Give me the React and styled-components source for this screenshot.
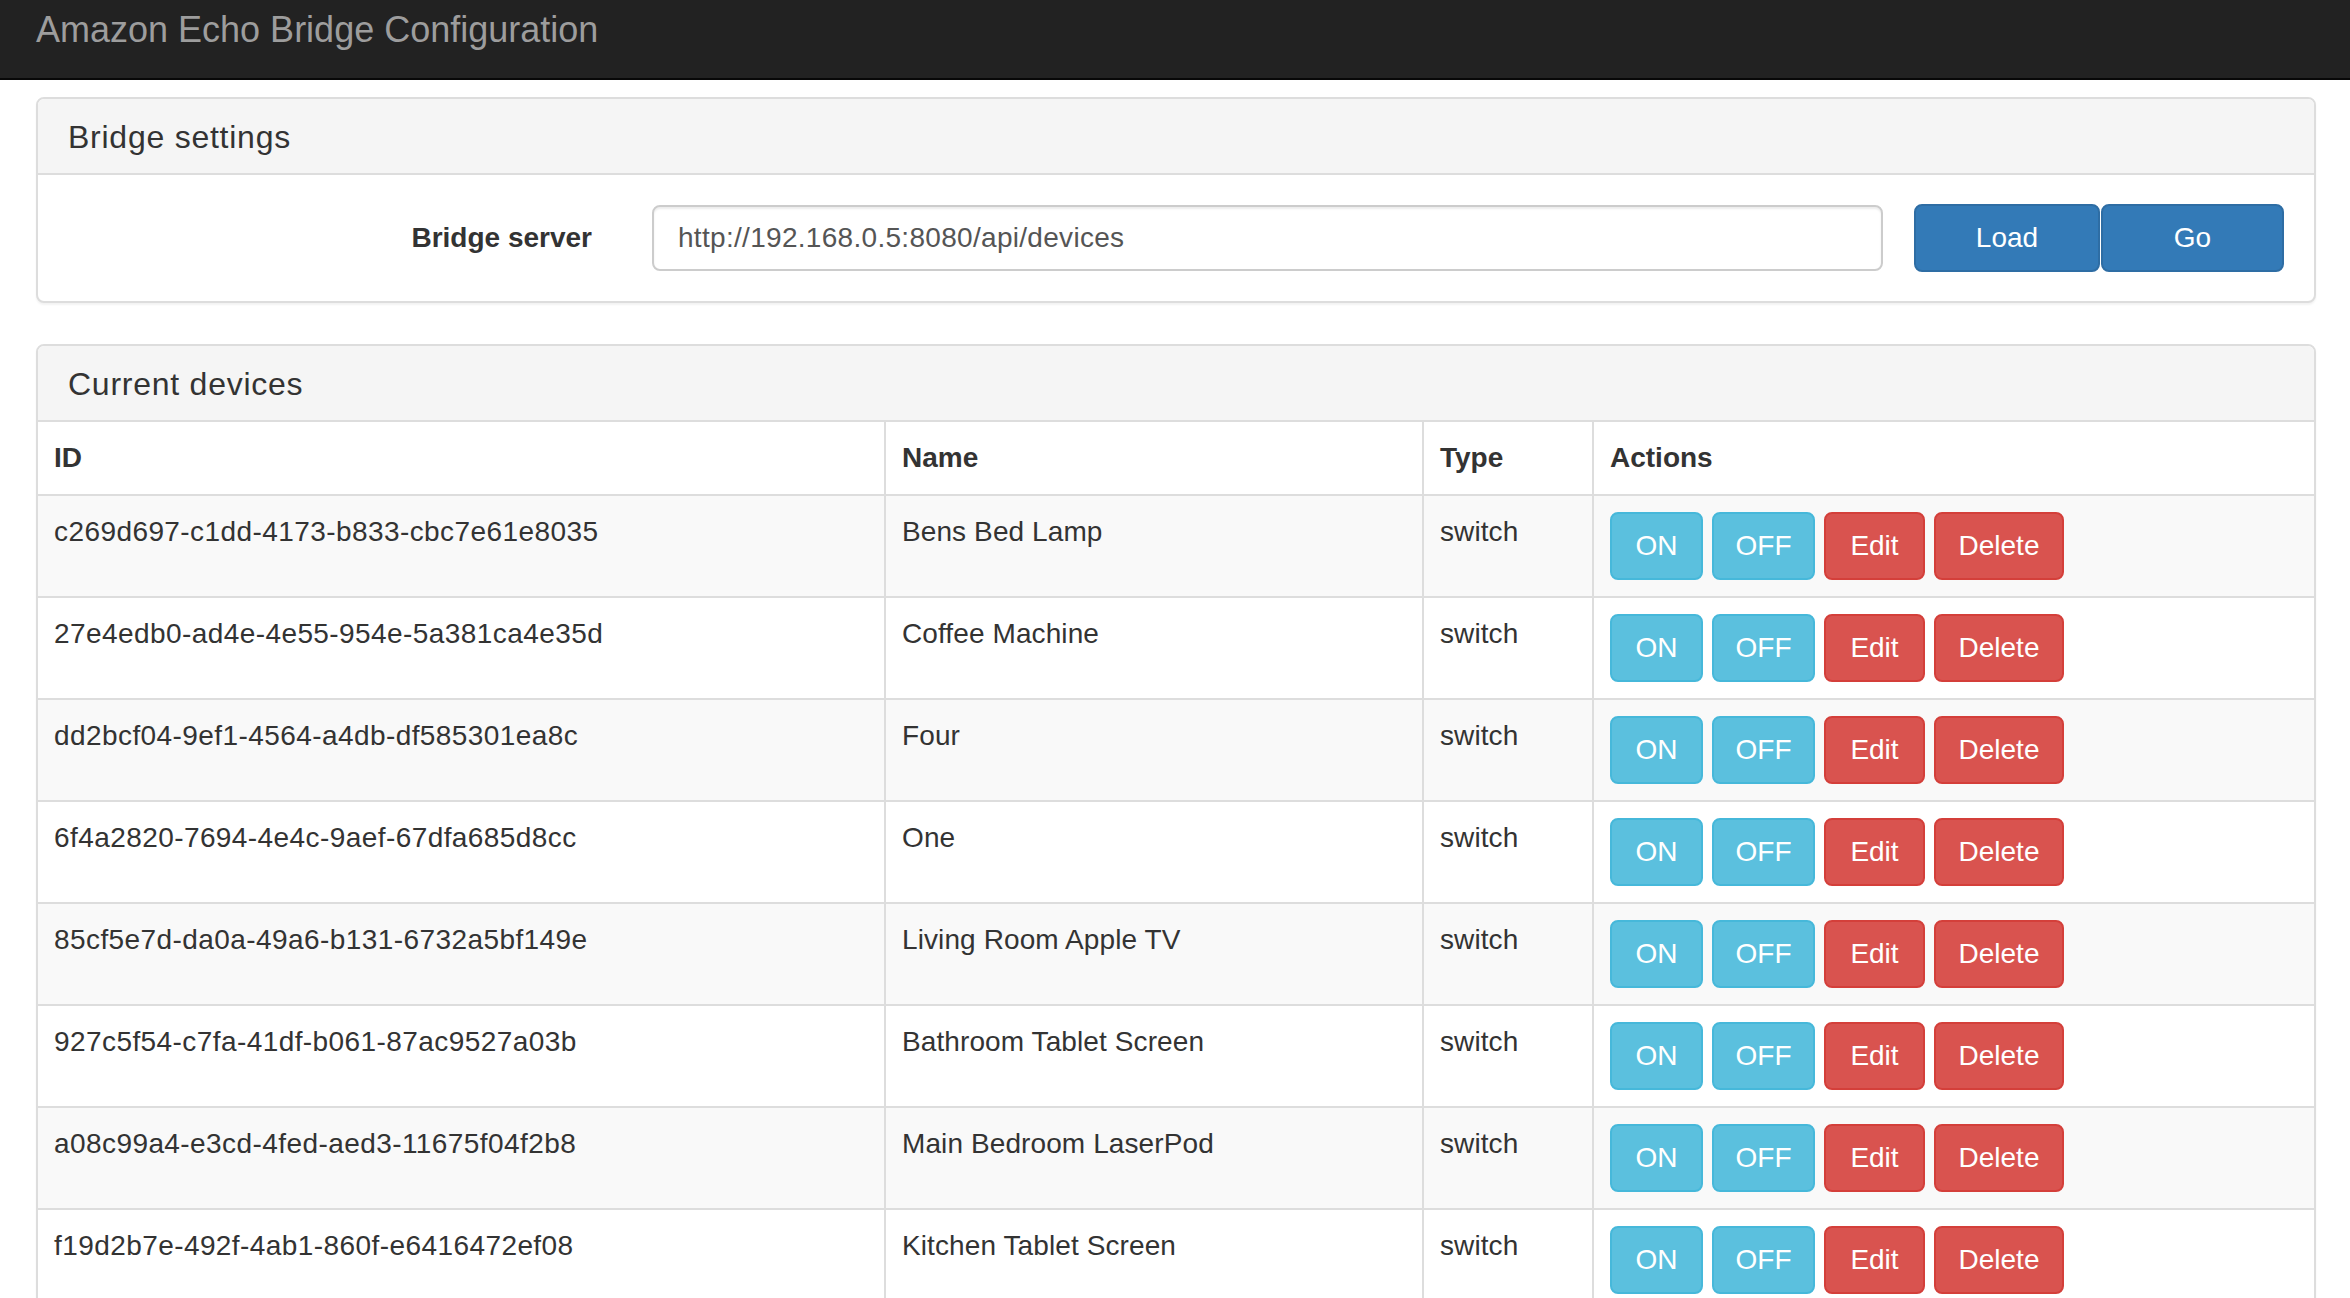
import React from 'react';
import styled, { createGlobalStyle } from 'styled-components';

const GlobalStyle = createGlobalStyle`
  html, body {
    margin: 0;
    padding: 0;
    background: #fff;
  }
  body {
    font-family: "Liberation Sans", Arial, Helvetica, sans-serif;
    font-size: 28px;
    line-height: 40px;
    color: #333;
  }
  * {
    box-sizing: border-box;
  }
`;

const Navbar = styled.div`
  height: 80px;
  background: #222;
  border-bottom: 2px solid #080808;
  padding: 10px 0 0 36px;
`;

const Brand = styled.div`
  font-size: 36px;
  line-height: 40px;
  color: #9d9d9d;
`;

const Main = styled.div`
  padding: 17px 34px 0 36px;
`;

const Panel = styled.div`
  background: #fff;
  border: 2px solid #ddd;
  border-radius: 8px;
  margin-bottom: 41px;
  box-shadow: 0 2px 2px rgba(0, 0, 0, 0.05);
  overflow: hidden;
`;

const PanelHeading = styled.div`
  background: #f5f5f5;
  border-bottom: 2px solid #ddd;
  padding: 21px 30px 19px;
`;

const PanelTitle = styled.h3`
  margin: 0;
  font-size: 32px;
  font-weight: normal;
  line-height: 34px;
  letter-spacing: 0.75px;
  color: #333;
`;

const PanelBody = styled.div`
  padding: 29px 30px;
`;

const FormRow = styled.div`
  display: flex;
  align-items: center;
`;

const Label = styled.label`
  width: 524px;
  margin-right: 60px;
  text-align: right;
  font-weight: bold;
`;

const Input = styled.input`
  flex: 1;
  height: 66px;
  padding: 12px 24px;
  font-family: inherit;
  font-size: 28px;
  letter-spacing: 0.3px;
  color: #555;
  border: 2px solid #ccc;
  border-radius: 8px;
  box-shadow: inset 0 2px 2px rgba(0, 0, 0, 0.075);
  outline: none;
`;

const ButtonGroup = styled.div`
  display: flex;
  gap: 1px;
  margin-left: 31px;
`;

const PrimaryButton = styled.button`
  width: ${p => p.$w}px;
  height: 68px;
  background: #337ab7;
  border: 2px solid #2e6da4;
  border-radius: 8px;
  color: #fff;
  font-family: inherit;
  font-size: 28px;
  cursor: pointer;
`;

const Table = styled.table`
  width: 100%;
  border-collapse: separate;
  border-spacing: 0;
  table-layout: fixed;
`;

const Th = styled.th`
  text-align: left;
  font-weight: bold;
  padding: 16px;
  line-height: 40px;
  border-bottom: 2px solid #ddd;
  border-left: ${p => (p.$first ? 'none' : '2px solid #ddd')};
`;

const Row = styled.tr`
  background: ${p => (p.$striped ? '#f9f9f9' : '#fff')};
`;

const Td = styled.td`
  padding: 16px;
  line-height: 40px;
  vertical-align: top;
  border-bottom: 2px solid #ddd;
  border-left: ${p => (p.$first ? 'none' : '2px solid #ddd')};
  letter-spacing: ${p => (p.$first ? '0.42px' : '0.1px')};
  white-space: nowrap;
`;

const Actions = styled.div`
  display: flex;
  gap: 9px;
`;

const ActionButton = styled.button`
  width: ${p => p.$w}px;
  height: 68px;
  padding: 0;
  border-radius: 8px;
  border: 2px solid ${p => (p.$danger ? '#d43f3a' : '#46b8da')};
  background: ${p => (p.$danger ? '#d9534f' : '#5bc0de')};
  color: #fff;
  font-family: inherit;
  font-size: 28px;
  letter-spacing: 0;
  cursor: pointer;
`;

const devices = [
  { id: 'c269d697-c1dd-4173-b833-cbc7e61e8035', name: 'Bens Bed Lamp' },
  { id: '27e4edb0-ad4e-4e55-954e-5a381ca4e35d', name: 'Coffee Machine' },
  { id: 'dd2bcf04-9ef1-4564-a4db-df585301ea8c', name: 'Four' },
  { id: '6f4a2820-7694-4e4c-9aef-67dfa685d8cc', name: 'One' },
  { id: '85cf5e7d-da0a-49a6-b131-6732a5bf149e', name: 'Living Room Apple TV' },
  { id: '927c5f54-c7fa-41df-b061-87ac9527a03b', name: 'Bathroom Tablet Screen' },
  { id: 'a08c99a4-e3cd-4fed-aed3-11675f04f2b8', name: 'Main Bedroom LaserPod' },
  { id: 'f19d2b7e-492f-4ab1-860f-e6416472ef08', name: 'Kitchen Tablet Screen' },
];

export default function App() {
  return (
    <>
      <GlobalStyle />
      <Navbar>
        <Brand>Amazon Echo Bridge Configuration</Brand>
      </Navbar>
      <Main>
        <Panel>
          <PanelHeading>
            <PanelTitle>Bridge settings</PanelTitle>
          </PanelHeading>
          <PanelBody>
            <FormRow>
              <Label>Bridge server</Label>
              <Input defaultValue="http://192.168.0.5:8080/api/devices" />
              <ButtonGroup>
                <PrimaryButton $w={186}>Load</PrimaryButton>
                <PrimaryButton $w={183}>Go</PrimaryButton>
              </ButtonGroup>
            </FormRow>
          </PanelBody>
        </Panel>

        <Panel>
          <PanelHeading>
            <PanelTitle>Current devices</PanelTitle>
          </PanelHeading>
          <Table>
            <colgroup>
              <col style={{ width: 846 }} />
              <col style={{ width: 538 }} />
              <col style={{ width: 170 }} />
              <col />
            </colgroup>
            <thead>
              <tr>
                <Th $first>ID</Th>
                <Th>Name</Th>
                <Th>Type</Th>
                <Th>Actions</Th>
              </tr>
            </thead>
            <tbody>
              {devices.map((d, i) => (
                <Row key={d.id} $striped={i % 2 === 0}>
                  <Td $first>{d.id}</Td>
                  <Td>{d.name}</Td>
                  <Td>switch</Td>
                  <Td>
                    <Actions>
                      <ActionButton $w={93}>ON</ActionButton>
                      <ActionButton $w={103}>OFF</ActionButton>
                      <ActionButton $w={101} $danger>Edit</ActionButton>
                      <ActionButton $w={130} $danger>Delete</ActionButton>
                    </Actions>
                  </Td>
                </Row>
              ))}
            </tbody>
          </Table>
        </Panel>
      </Main>
    </>
  );
}
